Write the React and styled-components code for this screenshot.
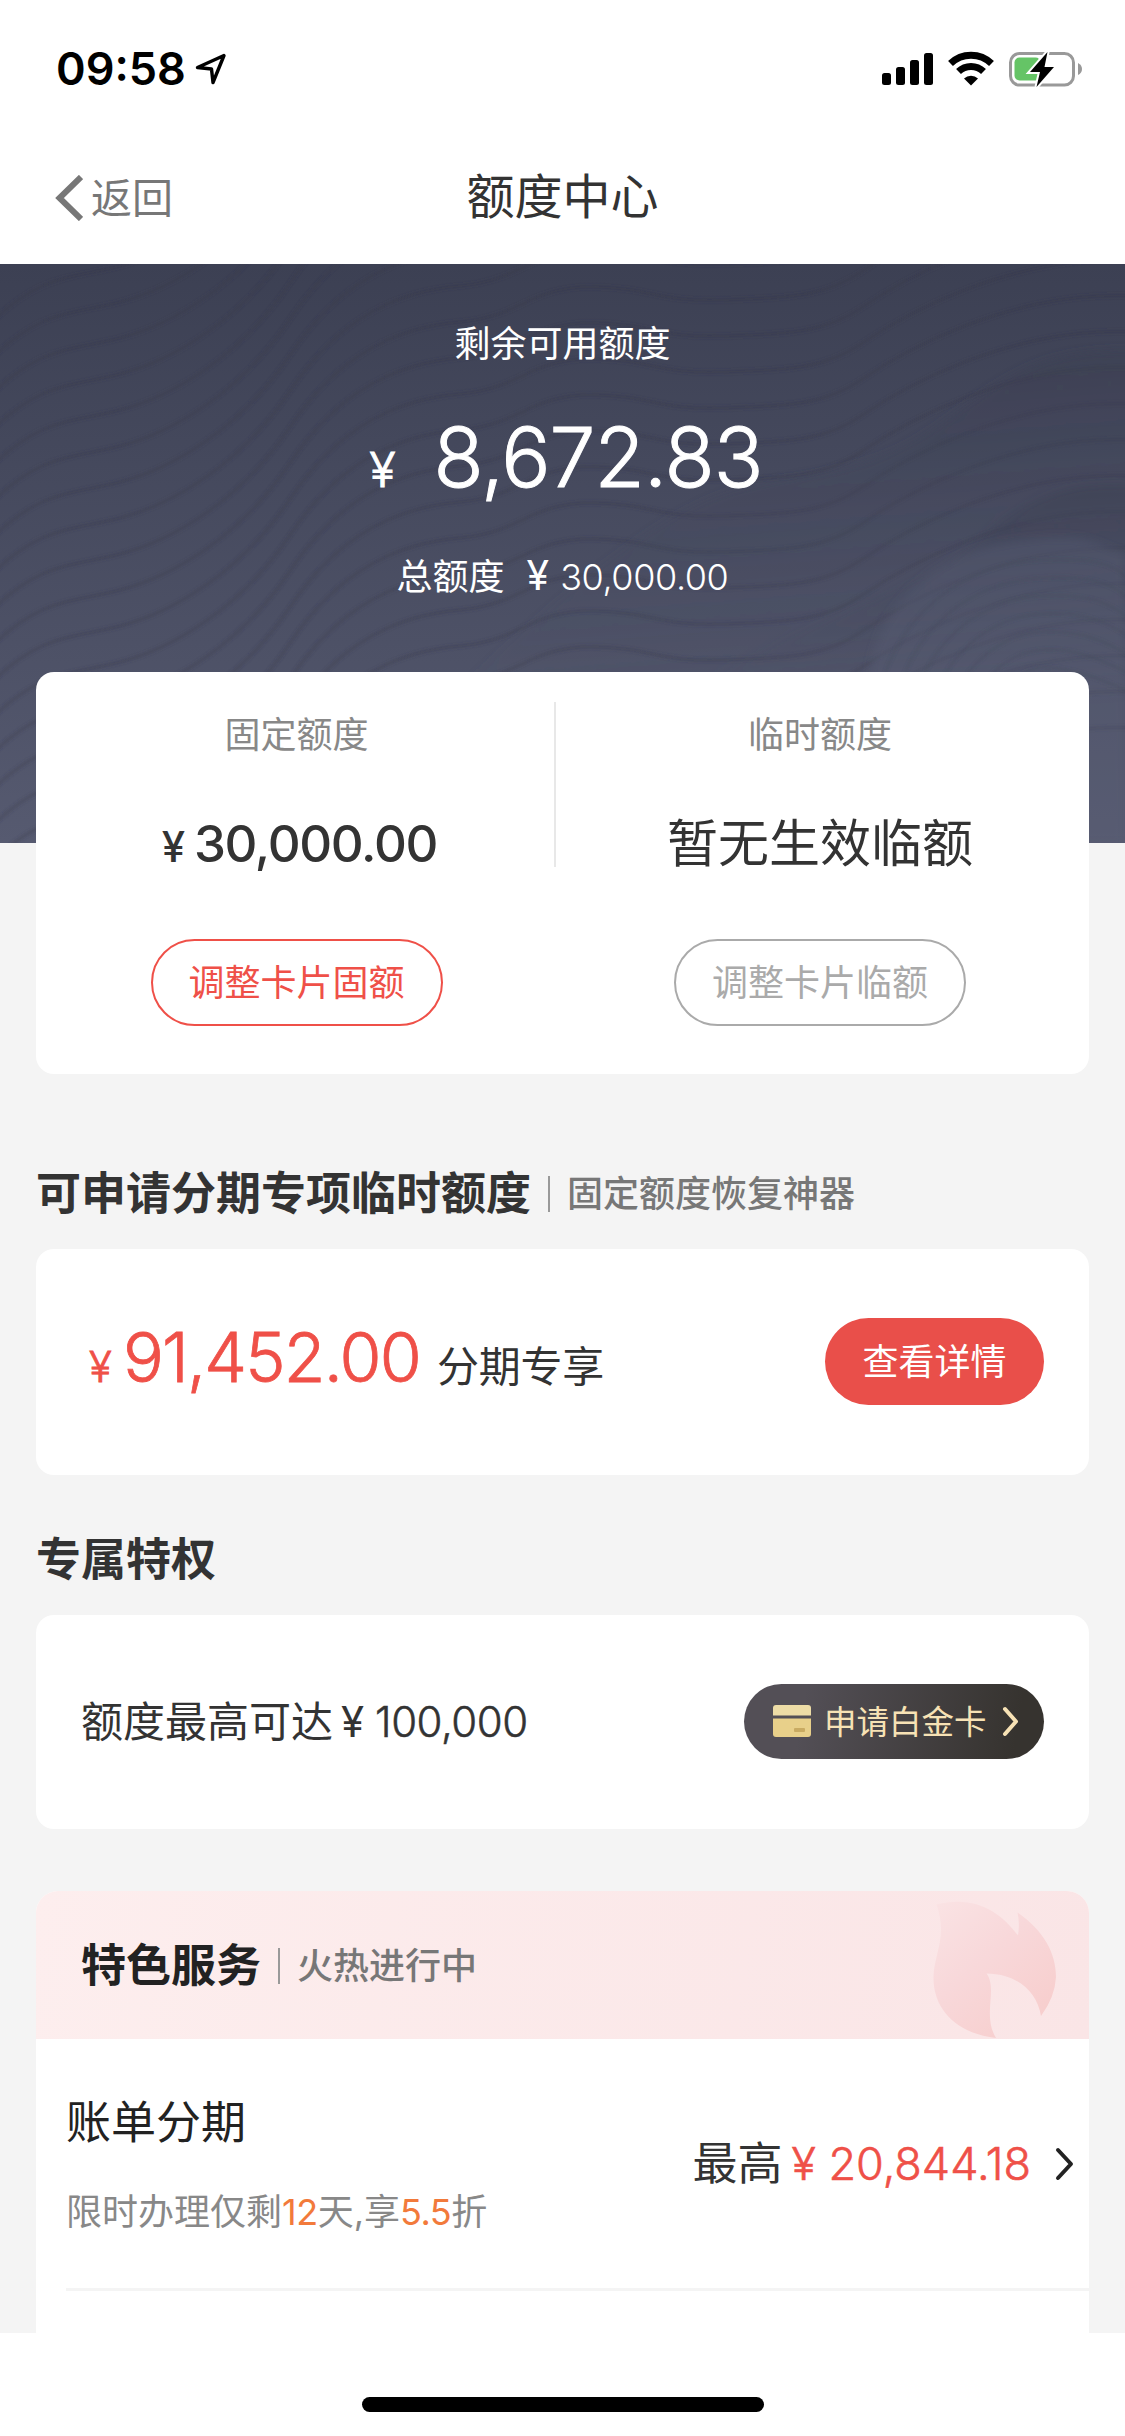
import React from 'react';
import styled, { createGlobalStyle } from 'styled-components';

const GlobalStyle = createGlobalStyle`
  * {
    box-sizing: border-box;
  }
  body {
    margin: 0;
    background-color: #ffffff;
    font-family: Inter, "Noto Sans CJK SC", sans-serif;
    color: #333333;
  }
`

const Page = styled.div`
  width: 1125px;
  height: 2436px;
  display: flex;
  flex-direction: column;
  overflow: hidden;
`

const StatusBar = styled.header`
  height: 132px;
  display: flex;
  align-items: flex-start;
  justify-content: space-between;
  padding: 47px 42px 0 56px;
`

const Clock = styled.div`
  display: flex;
  align-items: center;
  gap: 9px;
  font-size: 45px;
  font-weight: 600;
  line-height: 44px;
  color: #000000;
`

const Signals = styled.div`
  display: flex;
  gap: 15px;
  padding-top: 4px;
`

const NavBar = styled.nav`
  height: 132px;
  display: grid;
  grid-template-columns: 1fr auto 1fr;
  align-items: center;
  padding: 0 54px 3px;
`

const Back = styled.a`
  display: flex;
  align-items: center;
  gap: 8px;
  padding-top: 3px;
  font-size: 41px;
  line-height: 48px;
  color: #777777;
`

const Title = styled.h1`
  margin: 0;
  font-size: 48px;
  font-weight: 400;
  line-height: 60px;
`

const Content = styled.main`
  height: 2069px;
  background-color: #f4f4f4;
  overflow: hidden;
`

const Hero = styled.section`
  height: 579px;
  display: grid;
  background: linear-gradient(#3c4053, #565a70);
  > * {
    grid-area: 1 / 1;
  }
`

const HeroText = styled.div`
  display: flex;
  flex-direction: column;
  align-items: center;
  color: #ffffff;
`

const HeroLabel = styled.div`
  margin-top: 55px;
  font-size: 36px;
  line-height: 50px;
`

const HeroAmount = styled.div`
  display: flex;
  align-items: baseline;
  gap: 39px;
  margin: 39px 0 0 7px;
  font-size: 82px;
  font-weight: 300;
  line-height: 100px;
  letter-spacing: -0.9px;
  -webkit-text-stroke: 1px currentColor;
`

const HeroTotal = styled.div`
  display: flex;
  align-items: baseline;
  margin-top: 30px;
  font-size: 36px;
  line-height: 50px;
`

const TotalDigits = styled.span`
  font-weight: 300;
  letter-spacing: -0.4px;
`

const Yen = styled.span`
  font-size: ${props => props.size}px;
  font-weight: ${props => props.weight || 400};
  margin: 0 ${props => props.right || 0}px 0 ${props => props.left || 0}px;
`

const Card = styled.section`
  margin: 0 36px;
  background-color: #ffffff;
  border-radius: 18px;
`

const LimitCard = styled(Card)`
  position: relative;
  height: 402px;
  margin-top: -171px;
  display: flex;
`

const LimitColumn = styled.div`
  width: ${props => props.width}px;
  padding-left: ${props => props.inset || 0}px;
  display: flex;
  flex-direction: column;
  align-items: center;
`

const Divider = styled.div`
  width: 2px;
  height: 165px;
  margin-top: 30px;
  background-color: #e8e8e8;
`

const LimitLabel = styled.div`
  margin-top: 38px;
  font-size: 36px;
  line-height: 50px;
  color: #888888;
`

const LimitValue = styled.div`
  height: 70px;
  margin-top: 49px;
  font-size: 51px;
  font-weight: ${props => props.weight || 400};
  line-height: 70px;
  letter-spacing: ${props => props.spacing || 0}px;
`

const OutlineButton = styled.button`
  width: 292px;
  height: 87px;
  margin-top: 60px;
  padding: 0 0 5px;
  border: 2px solid ${props => props.color};
  border-radius: 44px;
  background: none;
  font-family: inherit;
  font-size: 36px;
  color: ${props => props.color};
`

const SectionTitle = styled.div`
  display: flex;
  align-items: center;
  height: 60px;
  margin: ${props => props.margin};
`

const Heading = styled.h2`
  margin: 0;
  font-size: 45px;
  font-weight: ${props => props.weight || 600};
  line-height: 60px;
  color: ${props => props.color || '#333333'};
`

const Bar = styled.i`
  width: 2px;
  height: 36px;
  margin: 0 17px;
  background-color: #999999;
`

const SubHeading = styled.span`
  font-size: 36px;
  font-weight: 500;
  line-height: 50px;
  color: #777777;
`

const OfferCard = styled(Card)`
  height: ${props => props.height}px;
  display: flex;
  align-items: center;
  justify-content: space-between;
  padding: 0 45px 2px ${props => props.left}px;
`

const OfferAmount = styled.div`
  display: flex;
  align-items: baseline;
  padding-top: 1px;
  font-size: 68px;
  font-weight: 300;
  line-height: 80px;
  letter-spacing: -1.8px;
  -webkit-text-stroke: 0.8px currentColor;
  color: #ef5048;
`

const OfferNote = styled.span`
  margin-left: 17px;
  font-size: 42px;
  font-weight: 400;
  letter-spacing: -0.2px;
  -webkit-text-stroke: 0;
  color: #333333;
`

const RedButton = styled.button`
  width: 219px;
  height: 87px;
  padding: 0 0 4px;
  border: none;
  border-radius: 44px;
  background-color: #e94f4a;
  color: #ffffff;
  font-family: inherit;
  font-size: 36px;
`

const PrivilegeText = styled.div`
  padding-top: 2px;
  font-size: 42px;
  line-height: 60px;
`

const PrivilegeDigits = styled.span`
  font-weight: 300;
  letter-spacing: -0.5px;
  -webkit-text-stroke: 0.5px currentColor;
`

const GoldButton = styled.button`
  width: 300px;
  height: 75px;
  display: flex;
  align-items: center;
  padding: 0 0 0 29px;
  border: none;
  border-radius: 38px;
  background: linear-gradient(100deg, #534f56 20%, #36332f 90%);
  color: #f7e2b5;
  font-family: inherit;
  font-size: 32.5px;
`

const GoldLabel = styled.span`
  margin: 0 15px 3px 13px;
`

const ServiceCard = styled.section`
  height: 460px;
  margin: 62px 36px 0;
  border-radius: 22px 22px 0 0;
  background-color: #ffffff;
  overflow: hidden;
`

const ServiceHead = styled.div`
  height: 148px;
  display: flex;
  justify-content: space-between;
  padding-left: 45px;
  background: linear-gradient(100deg, #fdeeee, #fae5e6);
`

const ServiceRow = styled.div`
  height: 252px;
  display: flex;
  align-items: center;
  justify-content: space-between;
  margin-left: 30px;
  padding-right: 14px;
  border-bottom: 3px solid #f4f4f4;
`

const ServiceName = styled.div`
  margin-top: 3px;
  font-size: 45px;
  line-height: 60px;
  color: #222222;
`

const ServiceHint = styled.div`
  margin-top: 34px;
  font-size: 36px;
  line-height: 50px;
  color: #888888;
`

const Accent = styled.span`
  letter-spacing: -0.5px;
  color: #f27a3b;
`

const ServiceAmount = styled.div`
  display: flex;
  align-items: center;
  font-size: 45px;
  line-height: 60px;
`

const Red = styled.span`
  margin: 0 24px 0 9px;
  font-weight: 300;
  -webkit-text-stroke: 0.6px currentColor;
  color: #ef5048;
`

const HomeArea = styled.footer`
  flex: 1;
  display: flex;
  justify-content: center;
  padding-top: 64px;
`

const HomeIndicator = styled.div`
  width: 402px;
  height: 15px;
  border-radius: 8px;
  background-color: #000000;
`

const Chevron = ({ width, height, stroke, color, left }) => (
    <svg width={width} height={height} viewBox={`0 0 ${width} ${height}`} fill="none" stroke={color} strokeWidth={stroke}>
        {left
            ? <path d={`M${width - 2} 2L5.500 ${height / 2}L${width - 2} ${height - 2}`} />
            : <path d={`M3 3L${width - 4} ${height / 2}L3 ${height - 3}`} strokeLinecap="round" strokeLinejoin="round" />}
    </svg>
)

// soft contour lines behind the balance
const waves = Array.from({ length: 24 }, (_, i) => 60 + i * 36)

const rings = [0, 1, 2, 3, 4, 5, 6]

const HeroWaves = () => (
    <svg width="1125" height="579" viewBox="0 0 1125 579" fill="none">
        <defs>
            <linearGradient id="ridge" x1="0" y1="0" x2="0.15" y2="1">
                <stop offset="0" stopColor="#363a4c" stopOpacity="0.55" />
                <stop offset="0.6" stopColor="#45495e" stopOpacity="0.2" />
                <stop offset="1" stopColor="#54586e" stopOpacity="0" />
            </linearGradient>
            <filter id="soft">
                <feGaussianBlur stdDeviation="1.500" />
            </filter>
            <filter id="softer">
                <feGaussianBlur stdDeviation="5" />
            </filter>
        </defs>
        <g stroke="#313447" strokeOpacity="0.26" strokeWidth="4" filter="url(#soft)">
            {waves.map(y => (
                <path key={y} d={`M-10 ${y}C40 ${y - 50} 70 ${y - 45} 120 ${y - 58}S240 ${y - 110} 290 ${y - 185}S400 ${y - 285} 460 ${y - 290}S530 ${y - 325} 590 ${y - 325}S660 ${y - 310} 717 ${y - 312}S820 ${y - 312} 861 ${y - 340}S1010 ${y - 430} 1135 ${y - 424}`} />
            ))}
        </g>
        <g fill="url(#ridge)" filter="url(#softer)">
            <path d="M1140 86C1040 84 1010 110 940 160S820 205 740 225S560 330 420 460H1140Z" />
            <path d="M1140 222C1050 212 1010 250 960 290S820 350 700 420V470H1140Z" />
        </g>
        <path d="M870 420C870 350 930 290 1010 278S1090 280 1125 290V579H870Z" fill="#5a5e75" fillOpacity="0.35" filter="url(#softer)" />
        <g stroke="#3f4358" strokeOpacity="0.25" strokeWidth="3" filter="url(#soft)">
            {rings.map(i => (
                <path key={i} d={`M${875 + i * 18} 470C${875 + i * 18} ${370 + i * 12} ${950 + i * 10} ${300 + i * 18} 1040 ${296 + i * 18}S1120 ${315 + i * 18} 1140 ${325 + i * 18}`} />
            ))}
        </g>
    </svg>
)

function App() {
    return (
        <Page>
            <GlobalStyle />
            <StatusBar>
                <Clock>
                    09:58
                    <svg width="32" height="32" viewBox="0 0 32 32" fill="none" stroke="#000" strokeWidth="3.400" strokeLinejoin="round">
                        <path d="M29 2.500L2.500 14.500L16.500 16L18 29.500Z" />
                    </svg>
                </Clock>
                <Signals>
                    <svg width="52" height="36" viewBox="0 0 52 36">
                        <rect x="1" y="22" width="9" height="12" rx="2.500" />
                        <rect x="15" y="16" width="9" height="18" rx="2.500" />
                        <rect x="29" y="9" width="9" height="25" rx="2.500" />
                        <rect x="43" y="2" width="9" height="32" rx="2.500" />
                    </svg>
                    <svg width="46" height="36" viewBox="0 0 46 36">
                        <g fill="none" stroke="#000" strokeWidth="7">
                            <path d="M2.500 12.500A29.500 29.500 0 0 1 43.500 12.500" />
                            <path d="M10.500 20.500A18 18 0 0 1 35.500 20.500" />
                        </g>
                        <path d="M16 27.500A10.500 10.500 0 0 1 30 27.500L23 34.500Z" />
                    </svg>
                    <svg width="74" height="36" viewBox="0 0 74 36">
                        <rect x="1.500" y="2.500" width="63" height="31.500" rx="9" fill="none" stroke="#999" strokeWidth="3" />
                        <rect x="5.500" y="6.500" width="26" height="23" rx="5" fill="#65c466" />
                        <path d="M69 12Q73 14 73 18T69 24Z" fill="#999" />
                        <path d="M38.500 1L21 21H31L27.500 36L45 16H35.500Z" stroke="#fff" strokeWidth="4" paintOrder="stroke" />
                    </svg>
                </Signals>
            </StatusBar>
            <NavBar>
                <Back>
                    <Chevron left width={29} height={46} stroke={6} color="#777777" />
                    返回
                </Back>
                <Title>额度中心</Title>
            </NavBar>
            <Content>
                <Hero>
                    <HeroWaves />
                    <HeroText>
                        <HeroLabel>剩余可用额度</HeroLabel>
                        <HeroAmount><Yen size={48} weight={300}>¥</Yen>8,672.83</HeroAmount>
                        <HeroTotal>总额度<Yen size={41} left={22} right={11}>¥</Yen><TotalDigits>30,000.00</TotalDigits></HeroTotal>
                    </HeroText>
                </Hero>
                <LimitCard>
                    <LimitColumn width={518} inset={3}>
                        <LimitLabel>固定额度</LimitLabel>
                        <LimitValue weight={500} spacing={-1.3}><Yen size={42} left={6} right={10} weight={500}>¥</Yen>30,000.00</LimitValue>
                        <OutlineButton color="#ef5048">调整卡片固额</OutlineButton>
                    </LimitColumn>
                    <Divider />
                    <LimitColumn width={528}>
                        <LimitLabel>临时额度</LimitLabel>
                        <LimitValue>暂无生效临额</LimitValue>
                        <OutlineButton color="#aaaaaa">调整卡片临额</OutlineButton>
                    </LimitColumn>
                </LimitCard>
                <SectionTitle margin="90px 36px 25px">
                    <Heading>可申请分期专项临时额度</Heading>
                    <Bar />
                    <SubHeading>固定额度恢复神器</SubHeading>
                </SectionTitle>
                <OfferCard height={226} left={53}>
                    <OfferAmount>
                        <Yen size={42} right={13} weight={300}>¥</Yen>91,452.00
                        <OfferNote>分期专享</OfferNote>
                    </OfferAmount>
                    <RedButton>查看详情</RedButton>
                </OfferCard>
                <SectionTitle margin="55px 36px 25px">
                    <Heading>专属特权</Heading>
                </SectionTitle>
                <OfferCard height={214} left={45}>
                    <PrivilegeText>额度最高可达<Yen size={42} left={8} right={11}>¥</Yen><PrivilegeDigits>100,000</PrivilegeDigits></PrivilegeText>
                    <GoldButton>
                        <svg width="38" height="32" viewBox="0 0 38 32">
                            <path d="M3 0H35Q38 0 38 3V10.500H0V3Q0 0 3 0Z" fill="#eddca6" />
                            <path d="M0 13.500H38V29Q38 32 35 32H3Q0 32 0 29Z" fill="#e8d08a" />
                            <rect x="21" y="23" width="11" height="4" rx="1" fill="#c9ab62" />
                        </svg>
                        <GoldLabel>申请白金卡</GoldLabel>
                        <Chevron width={18} height={31} stroke={4} color="#f7e2b5" />
                    </GoldButton>
                </OfferCard>
                <ServiceCard>
                    <ServiceHead>
                        <SectionTitle margin="45px 0 0">
                            <Heading weight={700} color="#222222">特色服务</Heading>
                            <Bar />
                            <SubHeading>火热进行中</SubHeading>
                        </SectionTitle>
                        <svg width="165" height="148" viewBox="0 0 165 148">
                            <defs>
                                <linearGradient id="flame" x1="0" y1="0" x2="0.8" y2="1">
                                    <stop offset="0" stopColor="#fae3e4" />
                                    <stop offset="0.45" stopColor="#f8d8da" />
                                    <stop offset="1" stopColor="#f7cdcc" />
                                </linearGradient>
                            </defs>
                            <path d="M12.500 13.500C50 4 76 20 94 44.500Q96 32 93.500 21.500C120 40 132 62 132 86Q131 106 117 125C113 101 94 83 62.500 82.500C74 98 58 124 72 147C35 143 9 120 9.500 86C10 62 24 46 12.500 13.500Z" fill="url(#flame)" />
                        </svg>
                    </ServiceHead>
                    <ServiceRow>
                        <div>
                            <ServiceName>账单分期</ServiceName>
                            <ServiceHint>限时办理仅剩<Accent>12</Accent>天,享<Accent>5.5</Accent>折</ServiceHint>
                        </div>
                        <ServiceAmount>
                            最高
                            <Red>¥ 20,844.18</Red>
                            <Chevron width={20} height={34} stroke={4} color="#222222" />
                        </ServiceAmount>
                    </ServiceRow>
                </ServiceCard>
            </Content>
            <HomeArea>
                <HomeIndicator />
            </HomeArea>
        </Page>
    )
}

export default App;
